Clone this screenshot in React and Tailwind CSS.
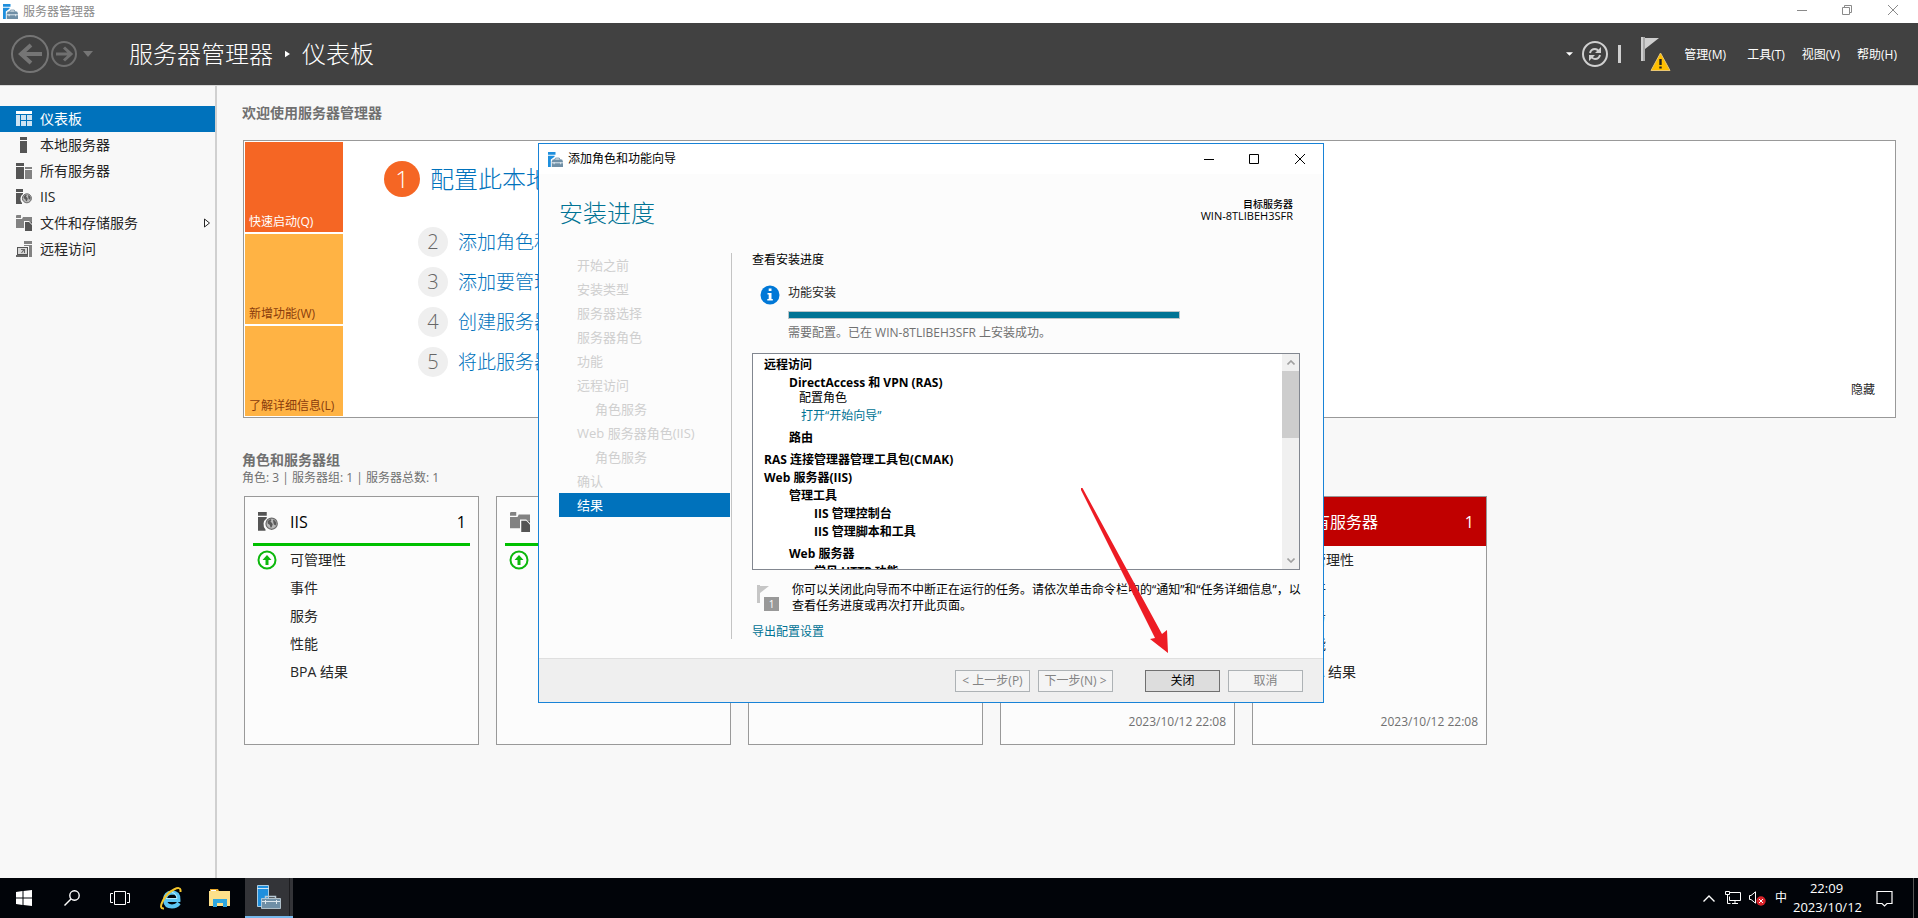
import React from 'react';

const navItems = [
  { label: '仪表板', icon: 'dashboard', active: true },
  { label: '本地服务器', icon: 'server' },
  { label: '所有服务器', icon: 'servers' },
  { label: 'IIS', icon: 'iis' },
  { label: '文件和存储服务', icon: 'files', expandable: true },
  { label: '远程访问', icon: 'remote' },
];

const menus = ['管理(M)', '工具(T)', '视图(V)', '帮助(H)'];

const quickSteps = [
  { no: 2, label: '添加角色和功能' },
  { no: 3, label: '添加要管理的其他服务器' },
  { no: 4, label: '创建服务器组' },
  { no: 5, label: '将此服务器连接到云服务' },
];

const cards = [
  { title: 'IIS', icon: 'iis', ok: true },
  { title: '文件和存储服务', icon: 'files', ok: true },
  { title: '远程访问', icon: 'remote', ok: true },
  { title: '本地服务器', icon: 'server', date: '2023/10/12 22:08' },
  { title: '所有服务器', icon: 'servers', date: '2023/10/12 22:08' },
];

const cardRows = ['可管理性', '事件', '服务', '性能', 'BPA 结果'];

const wizardSteps = [
  { label: '开始之前' },
  { label: '安装类型' },
  { label: '服务器选择' },
  { label: '服务器角色' },
  { label: '功能' },
  { label: '远程访问' },
  { label: '角色服务', child: true },
  { label: 'Web 服务器角色(IIS)' },
  { label: '角色服务', child: true },
  { label: '确认' },
  { label: '结果', active: true },
];

const results = [
  { label: '远程访问', style: 'pl-[11px] font-bold' },
  { label: 'DirectAccess 和 VPN (RAS)', style: 'pl-9 mt-1 font-bold' },
  { label: '配置角色', style: 'pl-[46px] mt-px' },
  { label: '打开“开始向导”', style: 'pl-12 mt-1 text-[#007394]', link: true },
  { label: '路由', style: 'pl-9 mt-2 font-bold' },
  { label: 'RAS 连接管理器管理工具包(CMAK)', style: 'pl-[11px] mt-2 font-bold' },
  { label: 'Web 服务器(IIS)', style: 'pl-[11px] mt-1 font-bold' },
  { label: '管理工具', style: 'pl-9 mt-1 font-bold' },
  { label: 'IIS 管理控制台', style: 'pl-[61px] mt-1 font-bold' },
  { label: 'IIS 管理脚本和工具', style: 'pl-[61px] mt-1 font-bold' },
  { label: 'Web 服务器', style: 'pl-9 mt-2 font-bold' },
  { label: '常见 HTTP 功能', style: 'pl-[61px] mt-1 font-bold' },
];

const RoleIcon = ({ name, className, light }) => {
  const dark = light ? '#ffffff' : '#555555';
  const mid = light ? '#e8b0b0' : '#828282';
  return (
    <svg viewBox="0 0 16 16" className={className} aria-hidden="true">
      {name === 'dashboard' && (
        <>
          <path fill="#fff" d="M0 0h16v3H0z" />
          <path fill="#cfe4f3" d="M0 4h4v11H0zM5 4h5v5H5zM11 4h5v5h-5zM5 10h5v5H5zM11 10h5v5h-5z" />
        </>
      )}
      {name === 'server' && <path fill={dark} d="M4 0h7v3H4zM4 4h7v12H4z" />}
      {name === 'servers' && (
        <>
          <path fill={dark} d="M0 0h8v3H0zM0 4h8v12H0z" />
          <path fill={mid} d="M9 4h7v2H9zM9 7h7v9H9z" />
        </>
      )}
      {name === 'iis' && (
        <>
          <path fill={dark} d="M0 0h7v3H0zM0 4h7v1a6 6 0 0 0-1 9v1H0z" />
          <circle cx="10.900" cy="9.300" r="4.500" fill="#b9b9b9" stroke="#6a6a6a" />
          <path fill="#5a5a5a" d="M7.600 7.400l2.200-1.800 1 .7-.8 1.300 1 1 .8 1.200-.9 2.300-.9.200-.5-1.900-1.700-1.100zM12 6l1.800 1 .8 1.800-.4 2-1.500-.9-.4-1.500z" />
        </>
      )}
      {name === 'files' && (
        <>
          <path fill={mid} d="M0 1q0-1 1-1h4v3H0zM0 4h6l1-2h9v5h-2l-1-1H8v7H0z" />
          <path fill={dark} d="M9 7h4l3 3v6H9z" />
          <path fill={dark} d="M14 7l2 2V7z" />
        </>
      )}
      {name === 'remote' && (
        <>
          <path fill={mid} d="M8 0h8v3H8zM8 4h8v12h-3V5H8z" />
          <path fill="#555" d="M1 6h11v8H1z" />
          <path fill="#d8d8d8" d="M2 7h9v6H2z" />
          <path fill="#666" d="M5 8h4v4H8V9.600L6 12H5l2-3H5zM0 14h12v2H0z" />
        </>
      )}
    </svg>
  );
};

const ToolboxIcon = ({ className }) => (
  <svg viewBox="0 0 16 16" className={className} aria-hidden="true">
    <path fill="#1f8fdd" d="M0 0h8v3H0zM0 4h7v1L3 8v8H0z" />
    <path fill="none" stroke="#7090a8" strokeWidth="1" d="M7 8.500l1-2h4l1 2" />
    <path fill="#6f8fa6" d="M5 8h10l1 2v6H4v-6z" />
    <path stroke="#e4edf3" strokeWidth="1" d="M4 11.500h12" />
    <path fill="#e4edf3" d="M6 11h1v2H6zM13 11h1v2h-1z" />
  </svg>
);

const WindowButtons = ({ restore }) => (
  <div className={`flex ${restore ? 'text-[#8a8a8a]' : 'text-black'}`}>
    <button type="button" aria-label="最小化" className="grid h-full w-[45px] place-items-center">
      <svg viewBox="0 0 10 10" className="size-[10px]"><path stroke="currentColor" d="M0 5.500h10" /></svg>
    </button>
    <button type="button" aria-label="最大化" className="grid h-full w-[45px] place-items-center">
      <svg viewBox="0 0 10 10" className="size-[10px]" fill="none" stroke="currentColor">
        {restore ? <path d="M.5 2.500h7v7h-7zM2.500 2.500v-2h7v7h-2" /> : <path d="M.5.5h9v9h-9z" />}
      </svg>
    </button>
    <button type="button" aria-label="关闭窗口" className="grid h-full w-[47px] place-items-center">
      <svg viewBox="0 0 10 10" className="size-[10px]"><path stroke="currentColor" d="M0 0l10 10M10 0L0 10" /></svg>
    </button>
  </div>
);

const Header = () => (
  <header className="flex h-[62px] shrink-0 items-center bg-[#414141] pr-[21px] pl-[11px] text-white">
    <button type="button" aria-label="后退">
      <svg viewBox="0 0 38 38" className="size-[38px]" fill="none" stroke="#757575">
        <circle cx="19" cy="19" r="18" strokeWidth="2" />
        <path d="M31 19H9" strokeWidth="4" />
        <path d="M20 10l-10 9 10 9" strokeWidth="4" />
      </svg>
    </button>
    <button type="button" aria-label="前进" className="ml-[2px]">
      <svg viewBox="0 0 26 26" className="size-[26px]" fill="none" stroke="#707070">
        <circle cx="13" cy="13" r="12" strokeWidth="2" />
        <path d="M5 13h15M13 6.500l7 6.500-7 6.500" strokeWidth="3" />
      </svg>
    </button>
    <button type="button" aria-label="历史记录" className="ml-[6px]">
      <svg viewBox="0 0 10 6" className="h-[6px] w-[10px]"><path fill="#757575" d="M0 0h10L5 6z" /></svg>
    </button>
    <h1 className="ml-9 flex items-center text-2xl font-light">
      <span>服务器管理器</span>
      <svg viewBox="0 0 6 8" className="mr-3 ml-3 h-2 w-[5px]"><path fill="#fff" d="M0 0l6 4-6 4z" /></svg>
      <span>仪表板</span>
    </h1>
    <div className="ml-auto flex items-center">
      <button type="button" aria-label="更多">
        <svg viewBox="0 0 8 4" className="h-1 w-[7px]"><path fill="#fff" d="M0 0h8L4 4z" /></svg>
      </button>
      <button type="button" aria-label="刷新" className="ml-[9px]">
        <svg viewBox="0 0 26 26" className="size-[26px]" fill="none" stroke="#d0d0d0">
          <circle cx="13" cy="13" r="12" strokeWidth="2" />
          <path strokeWidth="2" d="M8 12q1-4 5-4 2 0 3.500 2M18 14q-1 4-5 4-2 0-3.500-2" />
          <path fill="#d0d0d0" stroke="none" d="M19 6v6h-6zM7 20v-6h6z" />
        </svg>
      </button>
      <span className="ml-[10px] h-[18px] w-[3px] bg-[#cfcfcf]" />
      <button type="button" aria-label="通知" className="ml-5">
        <svg viewBox="0 0 30 36" className="h-9 w-[30px]">
          <path fill="#a9a9a9" d="M0 1h4v24H0z" />
          <path fill="#cfcfcf" d="M0 1h2v24H0zM4 2h14L4 13z" />
          <path fill="#ffbf00" stroke="#e9c774" strokeLinejoin="round" d="M19.500 17L29 34.500H10z" />
          <path stroke="#222" strokeWidth="2.400" d="M19.500 23v6M19.500 30.500v2" />
        </svg>
      </button>
      <nav className="ml-[13px] flex gap-[17px] pt-[2px] text-xs">
        {menus.map((m) => (
          <button type="button" key={m} className="first:mr-1">{m}</button>
        ))}
      </nav>
    </div>
  </header>
);

const Sidebar = () => (
  <nav className="w-[217px] shrink-0 border-r-2 border-[#d0d0d0] pt-5 text-sm text-[#262626]">
    {navItems.map((item) => (
      <a
        key={item.label}
        href="#"
        className={`flex h-[26px] items-center gap-2 pr-[5px] pl-4 ${item.active ? 'bg-[#0072bc] text-white' : ''}`}
      >
        <RoleIcon name={item.icon} className="size-4" />
        {item.label}
        {item.expandable && (
          <svg viewBox="0 0 6 9" className="ml-auto h-[10px] w-[6px]" fill="#fff" stroke="#262626"><path d="M.5.5L5.500 4.500.5 8.500z" /></svg>
        )}
      </a>
    ))}
  </nav>
);

const Welcome = () => (
  <section>
    <h2 className="text-sm leading-5 font-bold text-[#707070]">欢迎使用服务器管理器</h2>
    <div className="mt-[17px] mr-[22px] ml-px flex border border-[#999] bg-white p-px">
      <div className="flex w-[98px] shrink-0 flex-col gap-[2px] text-xs">
        <button type="button" className="flex h-[90px] items-end bg-[#f56624] p-1 pb-[2px] text-white">快速启动(Q)</button>
        <button type="button" className="flex h-[90px] items-end bg-[#ffb344] p-1 pb-[2px] text-[#8a3c0c]">新增功能(W)</button>
        <button type="button" className="flex h-[90px] items-end bg-[#ffb344] p-1 pb-[2px] text-[#8a3c0c]">了解详细信息(L)</button>
      </div>
      <div className="grow pt-[19px] pl-[41px] font-light text-[#0072bc]">
        <a href="#" className="flex items-center gap-[10px] text-2xl">
          <span className="grid size-9 place-items-center rounded-full bg-[#f56624] text-white">1</span>
          配置此本地服务器
        </a>
        <div className="mt-[30px] ml-[34px] flex flex-col gap-[10px]">
          {quickSteps.map((s) => (
            <a href="#" key={s.no} className="flex items-center gap-[10px] text-[19px] leading-7">
              <span className="grid size-[30px] place-items-center rounded-full bg-[#efefef] text-xl text-[#666]">{s.no}</span>
              {s.label}
            </a>
          ))}
        </div>
      </div>
      <button type="button" className="mr-[19px] mb-[18px] self-end text-xs text-[#262626]">隐藏</button>
    </div>
  </section>
);

const ServerCard = ({ card }) => (
  <article className="flex h-[249px] w-[235px] shrink-0 flex-col border border-[#999] bg-[#fcfcfc]">
    <div className={card.ok ? 'px-2' : 'bg-[#c00000] px-2 text-white'}>
      <div className={`flex h-[49px] items-center pr-1 pl-[5px] text-base ${card.ok ? 'border-b-3 border-[#00c000] pt-[3px] text-black' : ''}`}>
        <RoleIcon name={card.icon} light={!card.ok} className="size-5" />
        <span className="ml-3">{card.title}</span>
        <span className="ml-auto">1</span>
      </div>
    </div>
    <div className="relative text-sm text-[#262626]">
      {card.ok && (
        <svg viewBox="0 0 20 20" className="absolute top-1 left-3 size-5">
          <circle cx="10" cy="10" r="8.500" fill="#fff" stroke="#0db80d" strokeWidth="2" />
          <path fill="#0db80d" d="M10 5l4.500 5H11.500v5h-3v-5H5.500z" />
        </svg>
      )}
      <ul className="pl-[45px]">
        {cardRows.map((r) => (
          <li key={r}><a href="#" className="block h-7 leading-7">{r}</a></li>
        ))}
      </ul>
    </div>
    {card.date && <p className="mt-auto pr-2 pb-[14px] text-right text-xs text-[#707070]">{card.date}</p>}
  </article>
);

const Wizard = () => (
  <div role="dialog" aria-label="添加角色和功能向导" className="absolute top-[143px] left-[538px] flex h-[560px] w-[786px] flex-col border border-[#1883d7] bg-[#fcfcfc] text-xs text-black">
    <div className="flex h-[30px] shrink-0 bg-white pl-[9px]">
      <div className="flex grow items-center gap-[5px]">
        <ToolboxIcon className="size-[15px]" />
        添加角色和功能向导
      </div>
      <WindowButtons />
    </div>
    <div className="flex items-start justify-between pr-[30px] pl-5">
      <h2 className="mt-[21px] text-2xl leading-9 font-light text-[#007394]">安装进度</h2>
      <div className="mt-6 text-right text-[11px] leading-3">
        <p className="text-[10px] font-medium">目标服务器</p>
        <p>WIN-8TLIBEH3SFR</p>
      </div>
    </div>
    <div className="mt-[22px] flex pr-[22px] pl-5">
      <ol className="w-[171px] shrink-0 text-[13px] text-[#cfcfcf]">
        {wizardSteps.map((s, i) => (
          <li key={i} className={`h-6 leading-6 ${s.child ? 'pl-9' : 'pl-[18px]'} ${s.active ? 'bg-[#0072bc] text-white' : ''}`}>
            {s.label}
          </li>
        ))}
      </ol>
      <div className="ml-px h-[386px] min-w-0 grow border-l border-[#c4c4c4] pl-5">
        <h3 className="leading-[14px]">查看安装进度</h3>
        <div className="mt-4 flex gap-2 pl-2 text-[#262626]">
          <svg viewBox="0 0 20 20" className="mt-[2px] size-5">
            <circle cx="10" cy="10" r="9.500" fill="#0078d7" />
            <path fill="#fff" d="M8.700 3.500h2.800v2.600H8.700zM7.500 8h4v6h1.300v1.500H7.300V14h1.400V9.500H7.500z" />
          </svg>
          <div className="leading-4">
            <p className="mt-[2px]">功能安装</p>
            <div role="progressbar" aria-valuenow={100} aria-label="功能安装" className="mt-[10px] h-2 w-[392px] border border-[#bcc4c8] bg-[#007394]" />
            <p className="mt-[6px] text-[#707070]">需要配置。已在 WIN-8TLIBEH3SFR 上安装成功。</p>
          </div>
        </div>
        <div className="mt-3 mr-px flex h-[217px] border border-[#828790] bg-white">
          <ul className="grow overflow-hidden pt-1 pb-[2px]">
            {results.map((r, i) => (
              <li key={i} className={`h-[14px] leading-[14px] ${r.style}`}>
                {r.link ? <a href="#">{r.label}</a> : r.label}
              </li>
            ))}
          </ul>
          <div className="flex w-[17px] shrink-0 flex-col bg-[#f0f0f0]">
            <button type="button" aria-label="向上滚动" className="grid h-[17px] place-items-center">
              <svg viewBox="0 0 8 5" className="h-[5px] w-2" fill="none" stroke="#a0a0a0" strokeWidth="1.600"><path d="M.5 4.500L4 1l3.500 3.500" /></svg>
            </button>
            <div className="h-[67px] bg-[#cdcdcd]" />
            <button type="button" aria-label="向下滚动" className="mt-auto grid h-[17px] place-items-center">
              <svg viewBox="0 0 8 5" className="h-[5px] w-2" fill="none" stroke="#a0a0a0" strokeWidth="1.600"><path d="M.5.5L4 4 7.500.5" /></svg>
            </button>
          </div>
        </div>
        <div className="mt-3 -mr-1 flex pl-[5px]">
          <svg viewBox="0 0 22 26" className="mt-[3px] h-[26px] w-[22px] shrink-0">
            <path fill="#c6c6c6" d="M0 0h3v18H0zM3 1h9L3 8z" />
            <path fill="#999" d="M7 12h15v14H7z" />
            <text x="14.500" y="23" textAnchor="middle" fontSize="10" fill="#fff">1</text>
          </svg>
          <p className="ml-[13px] leading-4 whitespace-nowrap">
            你可以关闭此向导而不中断正在运行的任务。请依次单击命令栏中的“通知”和“任务详细信息”，以<br />
            查看任务进度或再次打开此页面。
          </p>
        </div>
        <a href="#" className="mt-[10px] block leading-4 text-[#007394]">导出配置设置</a>
      </div>
    </div>
    <div className="mt-auto flex h-[44px] items-center justify-end gap-2 border-t border-[#dfdfdf] bg-[#efefef] pr-5 text-[#838383]">
      <button type="button" disabled className="h-[22px] w-[75px] border border-[#adb2b5] bg-[#f4f4f4] whitespace-nowrap">&lt; 上一步(P)</button>
      <button type="button" disabled className="h-[22px] w-[75px] border border-[#adb2b5] bg-[#f4f4f4] whitespace-nowrap">下一步(N) &gt;</button>
      <button type="button" className="ml-6 h-[22px] w-[75px] border border-[#707070] bg-[#dddddd] text-black">关闭</button>
      <button type="button" disabled className="h-[22px] w-[75px] border border-[#adb2b5] bg-[#f4f4f4]">取消</button>
    </div>
    {/* red pointer to the close button */}
    <svg viewBox="0 0 90 166" className="pointer-events-none absolute top-[344px] left-[541px] h-[166px] w-[90px]">
      <path fill="#ed1c24" d="M1 0L2.500 0 82 146 87 142 88 165 70 151 75 150 1 2z" />
    </svg>
  </div>
);

const Taskbar = () => (
  <footer className="flex h-10 shrink-0 items-center bg-[#010409] text-white">
    <button type="button" aria-label="开始" className="grid h-full w-12 place-items-center">
      <svg viewBox="0 0 16 16" className="size-4"><path fill="#fff" d="M0 2l6.500-1v6.500H0zM7.500 1L16 0v7.500H7.500zM0 8.500h6.500V15L0 14zM7.500 8.500H16V16l-8.500-1z" /></svg>
    </button>
    <button type="button" aria-label="搜索" className="grid h-full w-12 place-items-center">
      <svg viewBox="0 0 16 16" className="size-4" fill="none" stroke="#fff" strokeWidth="1.400"><circle cx="10.500" cy="5.500" r="4.700" /><path d="M7 9L.5 15.500" /></svg>
    </button>
    <button type="button" aria-label="任务视图" className="grid h-full w-12 place-items-center">
      <svg viewBox="0 0 20 14" className="h-[14px] w-5" fill="none" stroke="#fff"><path d="M4.500.5h11v13h-11zM3 2.500H.5v9H3M17 2.500h2.500v9H17" /></svg>
    </button>
    <button type="button" aria-label="Internet Explorer" className="ml-[3px] grid h-full w-12 place-items-center">
      <svg viewBox="0 0 22 23" className="h-[23px] w-[22px]" fill="none">
        <path stroke="#5cc6f2" strokeWidth="4" d="M4.500 13H18.500Q19 5.500 12 5.500 5 6 5 13q.5 6.500 7 6.500 4.500 0 7-3.500" />
        <path stroke="#b8ecff" strokeWidth="1" d="M6 11.500H17Q16.500 6 12 5.500" />
        <path stroke="#f5c62c" strokeWidth="2" d="M4 21.500Q-1 22 2.500 14.500 6 6.500 14 2.500q6-3 6.500.5v2" />
      </svg>
    </button>
    <button type="button" aria-label="文件资源管理器" className="ml-px grid h-full w-12 place-items-center">
      <svg viewBox="0 0 22 18" className="h-[18px] w-[22px]">
        <path fill="#e8a92c" d="M1 0h8l1 2H1z" />
        <path fill="#fde08a" d="M0 2h21v15H0z" />
        <path fill="#fff" d="M2 1h5v1H2z" />
        <path fill="#2fa8e0" d="M4 10h14v8h-4v-4H8v4H4z" />
      </svg>
    </button>
    <button type="button" aria-label="服务器管理器" className="ml-px flex h-full w-12 items-center border-b-2 border-[#76b9ed] bg-[#333438]">
      <svg viewBox="0 0 24 24" className="ml-3 size-6">
        <path fill="#1f8fdd" stroke="#cde6f7" strokeWidth=".8" d="M.5.5h11v21H.5z" />
        <path stroke="#cde6f7" d="M0 3.500h12" />
        <path fill="none" stroke="#b9cad6" strokeWidth="1.500" d="M8.500 13v-1.500h10V13" />
        <path fill="#6f8fa6" stroke="#c6d5df" strokeWidth=".8" d="M4.500 13.500h19v10h-19z" />
        <path stroke="#dbe6ed" d="M5 16.500h18M8.500 15v4M19.500 15v4" />
      </svg>
      <span className="mr-[3px] ml-auto h-full w-px bg-[#1c1c1f]" />
    </button>
    <div className="ml-auto flex h-full items-center">
      <svg viewBox="0 0 12 7" className="h-[7px] w-3" fill="none" stroke="#fff" strokeWidth="1.400"><path d="M.5 6.500L6 1l5.500 5.500" /></svg>
      <svg viewBox="0 0 16 14" className="ml-[10px] h-[14px] w-4" fill="none" stroke="#fff"><path d="M5 1.500h10.500v8h-11v-4M.5.5h4v3h-4zM2.500 3.500v9h3M7 12.500h6M10 9.500v3" /></svg>
      <svg viewBox="0 0 17 15" className="ml-2 h-[15px] w-[17px]" fill="none">
        <path stroke="#fff" d="M.5 4.500H2L6.500.8v11.400L2 8.500H.5z" />
        <circle cx="12" cy="10" r="4.700" fill="#d8232a" />
        <path stroke="#fff" d="M10 8l4 4M14 8l-4 4" />
      </svg>
      <span className="ml-[9px] text-xs">中</span>
      <div className="mr-[2px] ml-[6px] w-[67px] text-center text-[13px] leading-[19px] whitespace-nowrap">
        <p>22:09</p>
        <p>2023/10/12</p>
      </div>
      <button type="button" aria-label="通知中心" className="mx-[14px]">
        <svg viewBox="0 0 17 17" className="size-[17px]" fill="none" stroke="#fff" strokeWidth="1.200"><path d="M1 1.500h15v12h-5L8.500 16 6 13.500H1z" /></svg>
      </button>
      <span className="mr-1 ml-[6px] h-full w-px bg-[#555]" />
    </div>
  </footer>
);

const App = () => {
  return (
    <div className="relative flex h-screen flex-col overflow-hidden bg-[#f8f8f8] font-['Open_Sans','Noto_Sans_CJK_SC',sans-serif]">
      <div className="flex h-[23px] shrink-0 items-center bg-white pl-[3px]">
        <ToolboxIcon className="size-[15px]" />
        <span className="ml-[5px] text-xs text-[#8a8a8a]">服务器管理器</span>
        <div className="ml-auto flex h-5 self-start pr-[2px]"><WindowButtons restore /></div>
      </div>
      <Header />
      <div className="flex min-h-0 grow border-t border-[#d8d8d8]">
        <Sidebar />
        <main className="min-w-0 grow overflow-hidden pt-[17px] pl-[25px]">
          <Welcome />
          <section className="mt-8">
            <h2 className="text-sm leading-5 font-bold text-[#707070]">角色和服务器组</h2>
            <p className="text-xs leading-4 text-[#707070]">角色: 3 | 服务器组: 1 | 服务器总数: 1</p>
            <div className="mt-[10px] ml-[2px] flex gap-[17px]">
              {cards.map((c) => (
                <ServerCard key={c.title} card={c} />
              ))}
            </div>
          </section>
        </main>
      </div>
      <Taskbar />
      <Wizard />
    </div>
  );
};

export default App;
